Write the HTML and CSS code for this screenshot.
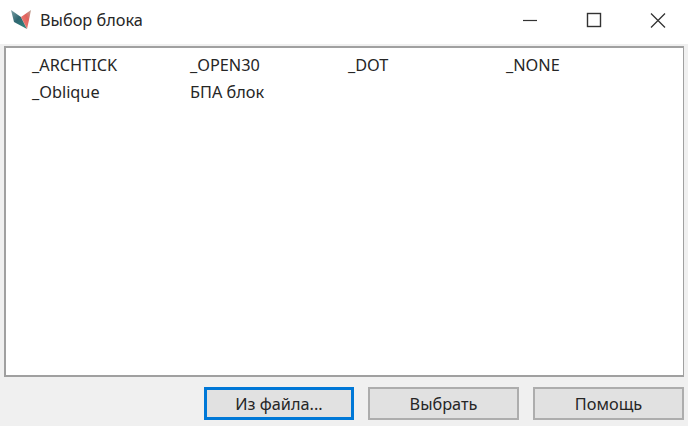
FILE: index.html
```html
<!DOCTYPE html>
<html lang="ru">
<head>
    <meta charset="UTF-8">
    <title>Выбор блока</title>
    <link rel="stylesheet" href="styles.css">
</head>
<body>
    <div class="window">
        <div class="titlebar">
            <svg class="logo" width="22" height="22" viewBox="0 0 22 22">
                <defs>
                    <linearGradient id="wing-left" x1="0" y1="0" x2="1" y2="1">
                        <stop offset="0" stop-color="#7fa3a8"/>
                        <stop offset="0.45" stop-color="#2f6670"/>
                        <stop offset="1" stop-color="#2f8a80"/>
                    </linearGradient>
                    <linearGradient id="wing-right" x1="1" y1="0" x2="0" y2="1">
                        <stop offset="0" stop-color="#b9a79a"/>
                        <stop offset="0.4" stop-color="#e2625c"/>
                        <stop offset="1" stop-color="#ea8a80"/>
                    </linearGradient>
                </defs>
                <path d="M1 1 L11 8 L17 20 L4 13 Z" fill="url(#wing-left)"/>
                <path d="M11 8 L21 1 L19 11 L17 20 Z" fill="url(#wing-right)"/>
            </svg>
            <span class="title">Выбор блока</span>
            <div class="window-btns">
                <svg class="win-btn" width="64" height="40" viewBox="0 0 64 40"><path d="M25 20.5 H39" stroke="#333" stroke-width="1.2" fill="none"/></svg>
                <svg class="win-btn" width="64" height="40" viewBox="0 0 64 40"><rect x="25.5" y="13.5" width="13" height="13" stroke="#333" stroke-width="1.4" fill="none"/></svg>
                <svg class="win-btn" width="64" height="40" viewBox="0 0 64 40"><path d="M25 13.5 L39 27.5 M39 13.5 L25 27.5" stroke="#333" stroke-width="1.3" fill="none"/></svg>
            </div>
        </div>
        <div class="content">
            <div class="block-list">
                <span>_ARCHTICK</span>
                <span>_OPEN30</span>
                <span>_DOT</span>
                <span>_NONE</span>
                <span>_Oblique</span>
                <span>БПА блок</span>
            </div>
            <div class="buttons">
                <button class="btn btn-default">Из файла...</button>
                <button class="btn">Выбрать</button>
                <button class="btn">Помощь</button>
            </div>
        </div>
    </div>
</body>
</html>
```
FILE: styles.css
```css
html, body {
    margin: 0;
    padding: 0;
}
body {
    width: 688px;
    height: 426px;
    overflow: hidden;
    font-family: "Noto Sans", "Open Sans", sans-serif;
    font-size: 16.3px;
    color: #262626;
    background: #f0f0f0;
}
.titlebar {
    height: 44px;
    background: #fff;
    display: flex;
    align-items: center;
    padding: 0 0 4px 10px;
    box-sizing: border-box;
}
.logo {
    margin-right: 8px;
}
.title {
    flex: 1;
}
.window-btns {
    display: flex;
    margin-right: -2px;
}
.win-btn {
    display: block;
}
.content {
    padding: 2px 4px 0 4px;
}
.block-list {
    height: 331px;
    box-sizing: border-box;
    background: #fff;
    border: 2px solid #a0a0a0;
    border-right-width: 1px;
    padding: 3px 0 0 26px;
    display: grid;
    grid-template-columns: repeat(4, 158px);
    grid-auto-rows: 27px;
    align-items: center;
}
.buttons {
    display: flex;
    justify-content: flex-end;
    gap: 14px;
    margin-top: 10px;
}
.btn {
    width: 151px;
    height: 33px;
    font: inherit;
    color: inherit;
    background: #e1e1e1;
    border: 2px solid #adadad;
    padding: 0;
}
.btn-default {
    width: 150px;
    border: 3px solid #0078d7;
}
```
